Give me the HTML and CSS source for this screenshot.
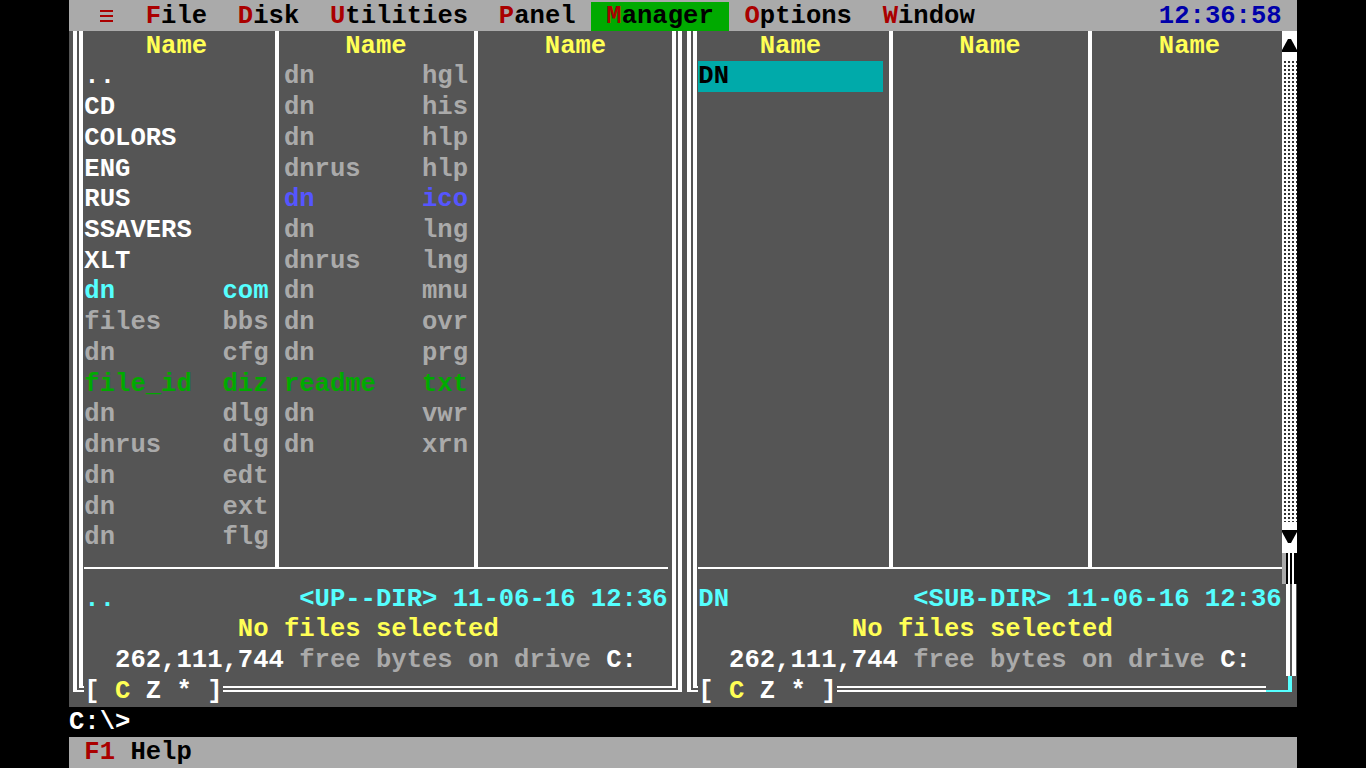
FILE: index.html
```html
<!DOCTYPE html>
<html lang="en">
<head>
<meta charset="utf-8">
<title>DOS Navigator</title>
<link rel="stylesheet" href="styles.css">
</head>
<body>
<div class="screen">
  <div class="menubar">
    <div class="items">  <span class="ham"></span>  <span class="hot">F</span>ile  <span class="hot">D</span>isk  <span class="hot">U</span>tilities  <span class="hot">P</span>anel <span class="sel"> <span class="hot">M</span>anager </span> <span class="hot">O</span>ptions  <span class="hot">W</span>indow</div>
    <div class="clock">12:36:58</div>
  </div>

  <div class="panels">
    <section class="panel">
      <div class="vdouble col-l"></div>
      <div class="hdr c2">Name</div>
      <div class="vsingle c3"></div>
      <div class="hdr c4">Name</div>
      <div class="vsingle c5"></div>
      <div class="hdr c6">Name</div>
      <div class="vdouble col-r"></div>

      <div class="files c2">
        <div class="w">..</div>
        <div class="w">CD</div>
        <div class="w">COLORS</div>
        <div class="w">ENG</div>
        <div class="w">RUS</div>
        <div class="w">SSAVERS</div>
        <div class="w">XLT</div>
        <div class="c">dn       com</div>
        <div class="g">files    bbs</div>
        <div class="g">dn       cfg</div>
        <div class="gr">file_id  diz</div>
        <div class="g">dn       dlg</div>
        <div class="g">dnrus    dlg</div>
        <div class="g">dn       edt</div>
        <div class="g">dn       ext</div>
        <div class="g">dn       flg</div>
      </div>
      <div class="files c4">
        <div class="g">dn       hgl</div>
        <div class="g">dn       his</div>
        <div class="g">dn       hlp</div>
        <div class="g">dnrus    hlp</div>
        <div class="b">dn       ico</div>
        <div class="g">dn       lng</div>
        <div class="g">dnrus    lng</div>
        <div class="g">dn       mnu</div>
        <div class="g">dn       ovr</div>
        <div class="g">dn       prg</div>
        <div class="gr">readme   txt</div>
        <div class="g">dn       vwr</div>
        <div class="g">dn       xrn</div>
      </div>
      <div class="files c6"></div>

      <div class="sep"></div>

      <div class="info">
        <div class="line c"><span>..</span><span>&lt;UP--DIR&gt; 11-06-16 12:36</span></div>
        <div class="line y pad10">No files selected</div>
        <div class="line g pad2"><span class="w">262,111,744</span> free bytes on drive <span class="w">C:</span></div>
      </div>

      <div class="corner-bl"><div class="co"><div class="ci"></div></div></div>
      <div class="bottom"><span class="drives">[ <span class="y">C</span> Z * ]</span><span class="hdouble"></span></div>
      <div class="corner-br"><div class="co"><div class="ci"></div></div></div>
    </section>

    <section class="panel">
      <div class="vdouble col-l"></div>
      <div class="hdr c2">Name</div>
      <div class="vsingle c3"></div>
      <div class="hdr c4">Name</div>
      <div class="vsingle c5"></div>
      <div class="hdr c6">Name</div>

      <div class="scrollbar">
        <div class="arrow">
          <svg width="15" height="31" viewBox="0 0 15 31"><path d="M6 8 H9 L15 19 V21 H0 V19 Z" fill="#000"/></svg>
        </div>
        <div class="dots"></div>
        <div class="arrow">
          <svg width="15" height="31" viewBox="0 0 15 31"><path d="M0 8 H15 V10 L9 21 H6 L0 10 Z" fill="#000"/></svg>
        </div>
      </div>

      <div class="files c2">
        <div class="cursor">DN</div>
      </div>
      <div class="files c4"></div>
      <div class="files c6"></div>

      <div class="sep"></div>
      <div class="thumb"></div>

      <div class="info">
        <div class="line c"><span>DN</span><span>&lt;SUB-DIR&gt; 11-06-16 12:36</span></div>
        <div class="line y pad10">No files selected</div>
        <div class="line g pad2"><span class="w">262,111,744</span> free bytes on drive <span class="w">C:</span></div>
      </div>
      <div class="vdouble col-r info-row"></div>

      <div class="corner-bl"><div class="co"><div class="ci"></div></div></div>
      <div class="bottom wide"><span class="drives">[ <span class="y">C</span> Z * ]</span><span class="hdouble"></span><span class="grip"></span></div>
    </section>
  </div>

  <div class="cmd">C:\&gt;</div>
  <div class="status"> <span class="hot">F1</span> Help</div>
</div>
</body>
</html>
```

FILE: styles.css
```css
html, body {
  margin: 0;
  padding: 0;
  background: #000;
}
body {
  width: 1366px;
  height: 768px;
  overflow: hidden;
}
.screen {
  width: 1228px;
  height: 768px;
  margin-left: 69px;
  display: grid;
  grid-template-rows: 30.72px 675.84px 30.72px 30.72px;
  font-family: "Liberation Mono", "DejaVu Sans Mono", monospace;
  font-size: 25.58px;
  line-height: 30.72px;
  font-weight: bold;
  white-space: normal;
}

/* text leaves keep their spacing */
.items, .clock, .hdr, .files > div, .info .line, .drives, .cmd, .status {
  white-space: pre;
}

/* menu bar */
.menubar {
  background: #aaaaaa;
  color: #000;
  display: flex;
  line-height: 33px;
  height: 30.72px;
  overflow: hidden;
}
.menubar .items {
  flex: 1;
}
.hot {
  color: #aa0000;
}
.sel {
  background: #00aa00;
}
.clock {
  color: #0000aa;
  margin-right: 1ch;
}
.ham {
  display: inline-block;
  width: 1ch;
  height: 30.72px;
  vertical-align: top;
  background:
    linear-gradient(#aa0000, #aa0000) 0 10px / 13px 2px no-repeat,
    linear-gradient(#aa0000, #aa0000) 0 15px / 13px 2px no-repeat,
    linear-gradient(#aa0000, #aa0000) 0 20px / 13px 2px no-repeat;
}

/* panels */
.panels {
  display: grid;
  grid-template-columns: 614px 614px;
  background: #555555;
}
.panel {
  display: grid;
  grid-template-columns: 15.35px 184.2px 15.35px 184.2px 15.35px 184.2px 15.35px;
  grid-template-rows: 30.72px 491.52px 30.72px 92.16px 30.72px;
  color: #aaaaaa;
}

.c2 { grid-column: 2; }
.c3 { grid-column: 3; }
.c4 { grid-column: 4; }
.c5 { grid-column: 5; }
.c6 { grid-column: 6; }

.hdr {
  grid-row: 1;
  color: #ffff55;
  text-align: center;
  padding-top: 1px;
}
.files {
  grid-row: 2;
}
.files > div {
  height: 30.72px;
  line-height: 32.5px;
}

.vdouble {
  background: linear-gradient(to right,
    transparent 4px, #fff 4px 8px, transparent 8px 10px, #fff 10px 14px, transparent 14px);
}
.col-l {
  grid-column: 1;
  grid-row: 1 / 5;
}
.col-r {
  grid-column: 7;
  grid-row: 1 / 5;
}
.col-r.info-row {
  grid-row: 4;
}

.vsingle {
  grid-row: 1 / 4;
  align-self: start;
  height: 538.24px;
  background: linear-gradient(to right, transparent 6px, #fff 6px 10px, transparent 10px);
}

.sep {
  grid-column: 2 / 7;
  grid-row: 3;
  align-self: start;
  margin-top: 14px;
  height: 2px;
  background: #fff;
}

.info {
  grid-column: 2 / 7;
  grid-row: 4;
}
.info .line {
  height: 30.72px;
  line-height: 32px;
}
.info .line.c {
  display: flex;
  justify-content: space-between;
}
.pad10 { padding-left: 10ch; }
.pad2 { padding-left: 2ch; }

/* bottom border row */
.corner-bl {
  grid-column: 1;
  grid-row: 5;
}
.corner-br {
  grid-column: 7;
  grid-row: 5;
}
.co, .ci {
  box-sizing: border-box;
  border-bottom: 2px solid #fff;
}
.co { height: 16px; }
.ci { height: 12px; }
.corner-bl .co {
  margin-left: 4px;
  border-left: 4px solid #fff;
}
.corner-bl .ci {
  margin-left: 2px;
  border-left: 4px solid #fff;
}
.corner-br .co {
  margin-right: 1.35px;
  border-right: 4px solid #fff;
}
.corner-br .ci {
  margin-right: 2px;
  border-right: 4px solid #fff;
}

.bottom {
  grid-column: 2 / 7;
  grid-row: 5;
  display: flex;
}
.bottom.wide {
  grid-column: 2 / 8;
}
.drives {
  color: #fff;
  line-height: 32px;
}
.hdouble {
  flex: 1;
  background: linear-gradient(to bottom,
    transparent 10px, #fff 10px 12px, transparent 12px 14px, #fff 14px 16px, transparent 16px);
}
.grip {
  box-sizing: border-box;
  width: 25.7px;
  height: 16px;
  margin-right: 5px;
  border-right: 4px solid #55ffff;
  border-bottom: 2px solid #55ffff;
}

/* scrollbar */
.scrollbar {
  grid-column: 7;
  grid-row: 1 / 3;
  display: flex;
  flex-direction: column;
  background: #fff;
}
.arrow {
  height: 30.72px;
  display: flex;
}
.arrow svg {
  display: block;
}
.dots {
  flex: 1;
  background-color: #fff;
  background-image: repeating-conic-gradient(#333 0 25%, transparent 0 100%);
  background-size: 4px 4px;
}
.thumb {
  grid-column: 7;
  grid-row: 3;
  background: linear-gradient(to right,
    #aaaaaa 0 4px, #000 4px 6.5px, #fff 6.5px 8.5px, #000 8.5px 10.5px, #fff 10.5px 12.5px, #000 12.5px);
}

.cursor {
  background: #00aaaa;
  color: #000;
}

/* colours */
.w { color: #ffffff; }
.g { color: #aaaaaa; }
.y { color: #ffff55; }
.c { color: #55ffff; }
.b { color: #5555ff; }
.gr { color: #00aa00; }

/* bottom lines */
.cmd {
  background: #000;
  color: #fff;
  line-height: 32px;
  overflow: hidden;
}
.status {
  background: #aaaaaa;
  color: #000;
  line-height: 32px;
  overflow: hidden;
}
```
